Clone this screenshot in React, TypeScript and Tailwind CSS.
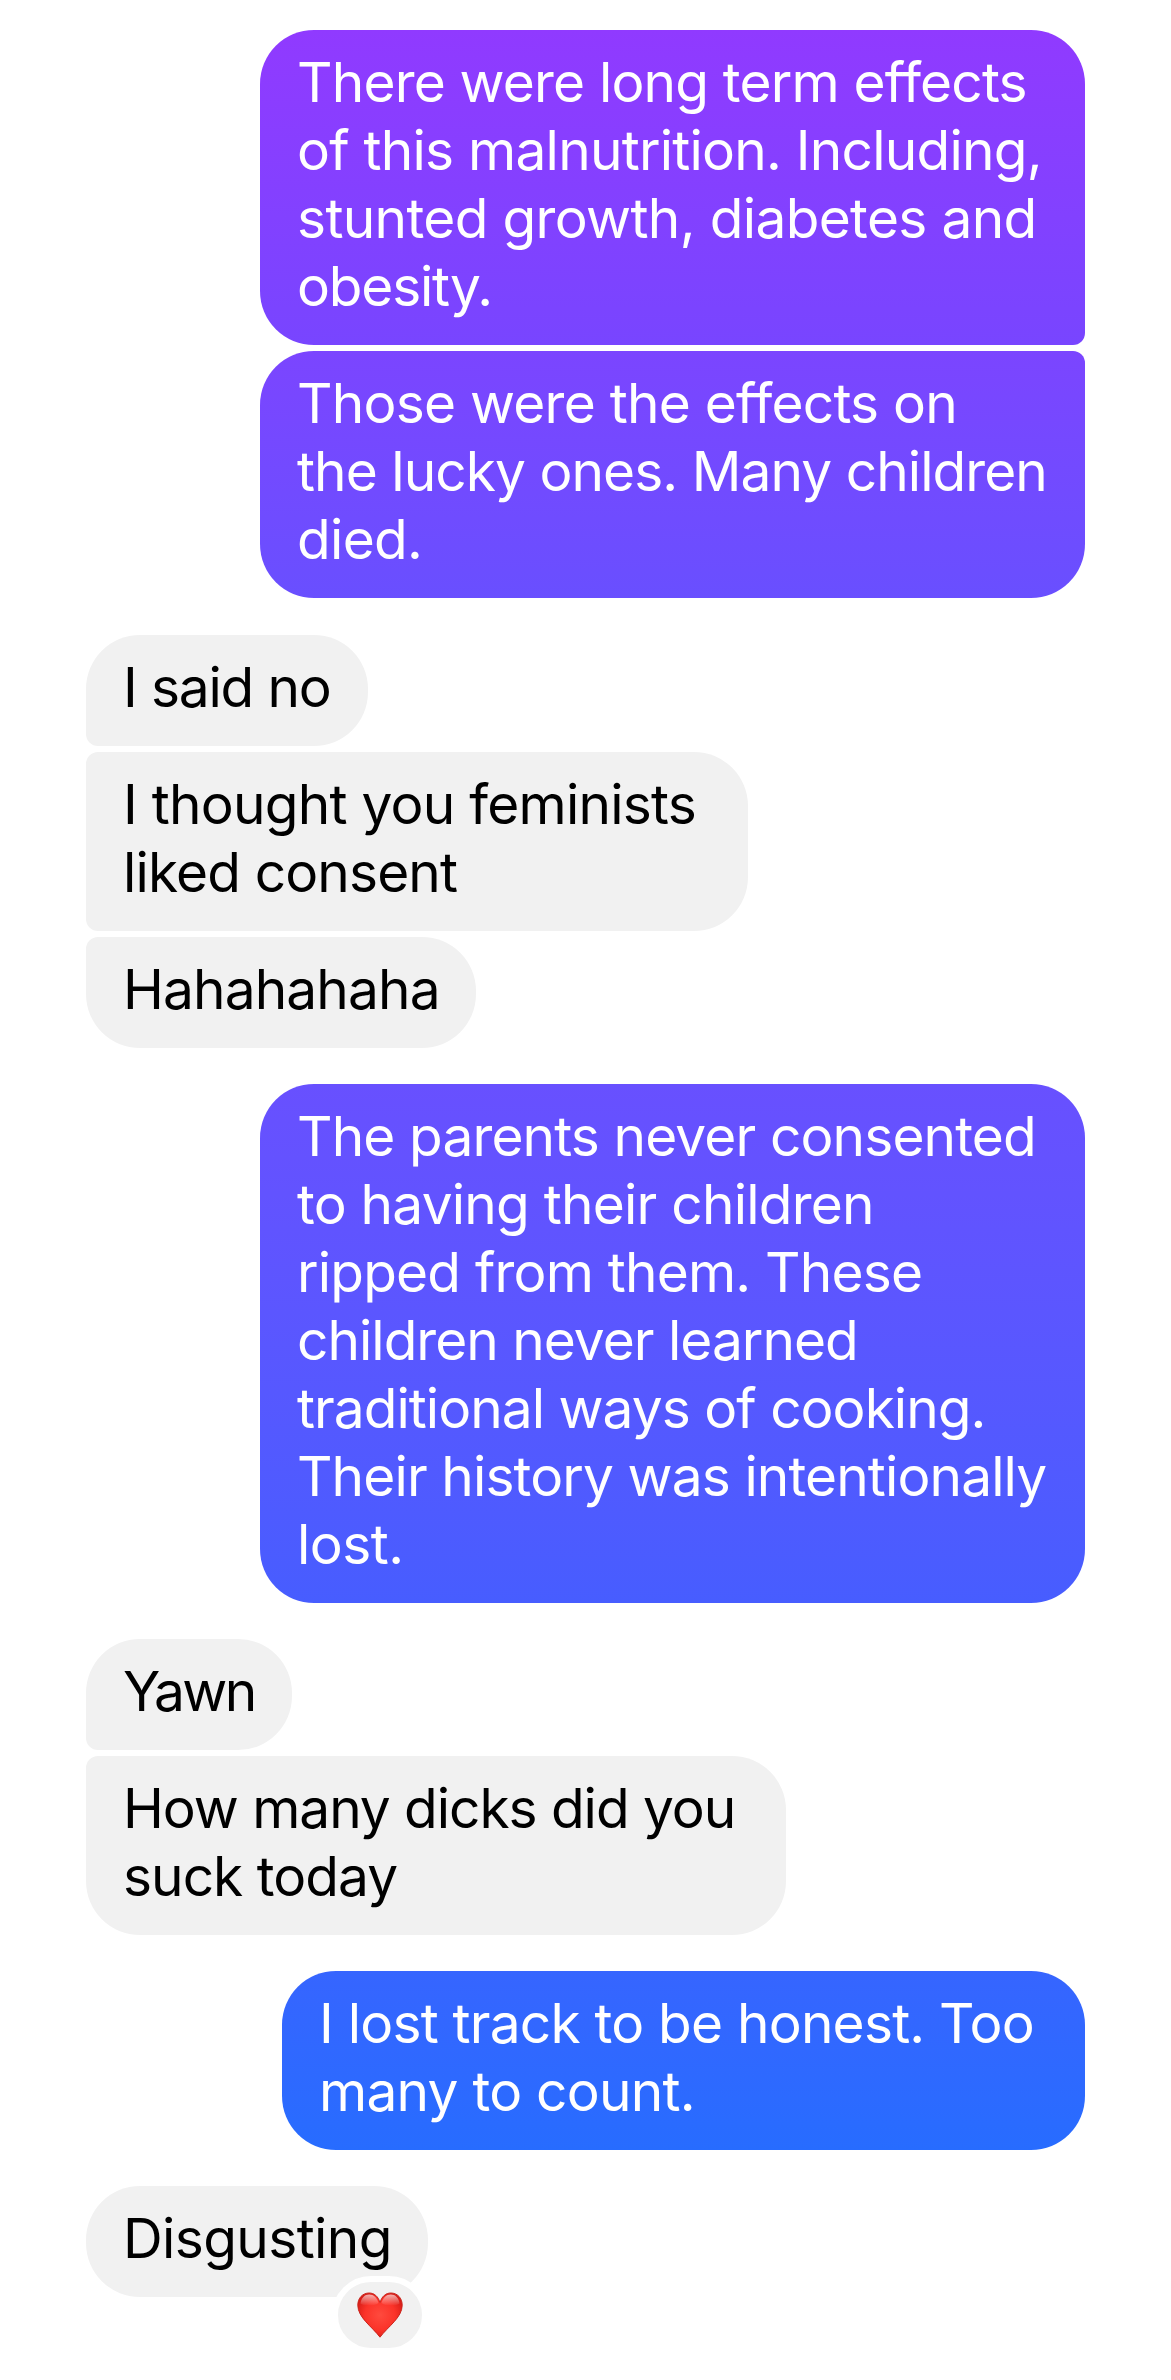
import clsx from "clsx";

type Line = { text: string; tracking: string };
type Message = { shape: string; lines: Line[]; liked?: boolean };
type Group = { mine: boolean; margin: string; messages: Message[] };

const groups: Group[] = [
  {
    mine: true,
    margin: "mt-[30px]",
    messages: [
      {
        shape: "w-[825px] rounded-br-[12px] from-[#903aff] to-[#7845ff]",
        lines: [
          { text: "There were long term effects", tracking: "tracking-[-0.812px]" },
          { text: "of this malnutrition. Including,", tracking: "tracking-[-0.76px]" },
          { text: "stunted growth, diabetes and", tracking: "tracking-[-0.647px]" },
          { text: "obesity.", tracking: "tracking-[-1.19px]" },
        ],
      },
      {
        shape: "w-[825px] rounded-tr-[12px] from-[#7b45ff] to-[#694fff]",
        lines: [
          { text: "Those were the effects on", tracking: "tracking-[-0.757px]" },
          { text: "the lucky ones. Many children", tracking: "tracking-[-0.936px]" },
          { text: "died.", tracking: "tracking-[-0.685px]" },
        ],
      },
    ],
  },
  {
    mine: false,
    margin: "mt-[37px]",
    messages: [
      {
        shape: "w-[282px] rounded-bl-[12px]",
        lines: [{ text: "I said no", tracking: "tracking-[-1.177px]" }],
      },
      {
        shape: "w-[662px] rounded-l-[12px]",
        lines: [
          { text: "I thought you feminists", tracking: "tracking-[-0.758px]" },
          { text: "liked consent", tracking: "tracking-[-0.857px]" },
        ],
      },
      {
        shape: "w-[390px] rounded-tl-[12px]",
        lines: [{ text: "Hahahahaha", tracking: "tracking-[-0.866px]" }],
      },
    ],
  },
  {
    mine: true,
    margin: "mt-9",
    messages: [
      {
        shape: "w-[825px] from-[#6850ff] to-[#475dff]",
        lines: [
          { text: "The parents never consented", tracking: "tracking-[-0.867px]" },
          { text: "to having their children", tracking: "tracking-[-0.766px]" },
          { text: "ripped from them. These", tracking: "tracking-[-0.792px]" },
          { text: "children never learned", tracking: "tracking-[-0.98px]" },
          { text: "traditional ways of cooking.", tracking: "tracking-[-0.96px]" },
          { text: "Their history was intentionally", tracking: "tracking-[-0.878px]" },
          { text: "lost.", tracking: "tracking-[-0.506px]" },
        ],
      },
    ],
  },
  {
    mine: false,
    margin: "mt-9",
    messages: [
      {
        shape: "w-[206px] rounded-bl-[12px]",
        lines: [{ text: "Yawn", tracking: "tracking-[-2.5px]" }],
      },
      {
        shape: "w-[700px] rounded-tl-[12px]",
        lines: [
          { text: "How many dicks did you", tracking: "tracking-[-1.039px]" },
          { text: "suck today", tracking: "tracking-[-0.96px]" },
        ],
      },
    ],
  },
  {
    mine: true,
    margin: "mt-9",
    messages: [
      {
        shape: "w-[803px] from-[#3665ff] to-[#276cff]",
        lines: [
          { text: "I lost track to be honest. Too", tracking: "tracking-[-0.782px]" },
          { text: "many to count.", tracking: "tracking-[-0.742px]" },
        ],
      },
    ],
  },
  {
    mine: false,
    margin: "mt-9",
    messages: [
      {
        shape: "w-[342px]",
        lines: [{ text: "Disgusting", tracking: "tracking-[-0.604px]" }],
        liked: true,
      },
    ],
  },
];

function Heart() {
  return (
    <svg width="46" height="46" viewBox="0 0 46 46">
      <defs>
        <radialGradient id="heartFill" cx="0.5" cy="0.5" r="0.62">
          <stop offset="0" stopColor="#ff4a3e" />
          <stop offset="0.55" stopColor="#fb3329" />
          <stop offset="1" stopColor="#cf1712" />
        </radialGradient>
        <linearGradient id="heartShine" x1="0" y1="0" x2="0" y2="1">
          <stop offset="0" stopColor="#fff" stopOpacity="0.65" />
          <stop offset="1" stopColor="#fff" stopOpacity="0" />
        </linearGradient>
      </defs>
      <path
        d="M23 10.5C21.2 4.2 17 1 12.2 1C5.6 1 .8 6 .8 13.2C.8 25.5 15 34.5 23 45.2C31 34.5 45.2 25.500 45.2 13.2C45.2 6 40.4 1 33.8 1C29 1 24.8 4.2 23 10.5Z"
        fill="url(#heartFill)"
        stroke="#c9251d"
        strokeWidth="1"
      />
      <path
        d="M3.5 11.5C4.2 6 7.6 2.6 12.2 2.6C16.8 2.6 20 5.8 21.5 11C17 14.5 8 14.5 3.5 11.5Z"
        fill="url(#heartShine)"
      />
      <path
        d="M42.5 11.5C41.8 6 38.4 2.6 33.8 2.6C29.2 2.6 26 5.8 24.5 11C29 14.5 38 14.5 42.5 11.5Z"
        fill="url(#heartShine)"
      />
    </svg>
  );
}

export default function App() {
  return (
    <main className="flex min-h-[2380px] w-full flex-col bg-white px-[86px] font-['Inter',sans-serif] text-[55px] leading-[68px]">
      {groups.map((group, i) => (
        <section
          key={i}
          className={clsx(
            "flex flex-col gap-1.5",
            group.margin,
            group.mine ? "items-end" : "items-start"
          )}
        >
          {group.messages.map((message) => (
            <div
              key={message.lines[0].text}
              className={clsx(
                "relative rounded-[54px] pt-[18px] pb-[25px] pl-[37px] whitespace-nowrap",
                group.mine
                  ? "bg-linear-to-b text-white"
                  : "bg-[#f1f1f1] text-black",
                message.shape
              )}
            >
              {message.lines.map((line) => (
                <p key={line.text} className={line.tracking}>
                  {line.text}
                </p>
              ))}

              {/* Reaction badge */}
              {message.liked && (
                <div className="absolute right-0 -bottom-[57px] box-content flex h-[66px] w-[84px] items-center justify-center rounded-full border-[6px] border-white bg-[#f1f1f1]">
                  <Heart />
                </div>
              )}
            </div>
          ))}
        </section>
      ))}
    </main>
  );
}
